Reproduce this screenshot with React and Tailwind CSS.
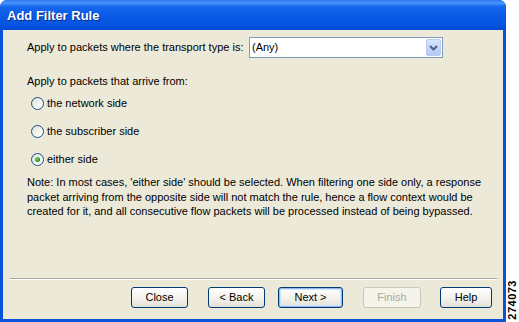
import { useState } from 'react';

const ui = { fontFamily: '"Liberation Sans", Arial, sans-serif' };

function Radio({ checked }) {
  return (
    <span className="relative inline-flex h-[13px] w-[13px] shrink-0 items-center justify-center rounded-full border border-[#1c5180] bg-gradient-to-br from-[#dcd9cd] via-[#f4f3ee] to-white">
      {checked && (
        <span className="h-[5px] w-[5px] rounded-full bg-[radial-gradient(circle_at_35%_35%,#7bd47b,#21a121_60%,#1a8a1a)]" />
      )}
    </span>
  );
}

function XpButton({ children, width, isDefault, disabled }) {
  return (
    <div
      className={
        'flex h-[21px] items-center justify-center rounded-[3px] border text-[11px] ' +
        (disabled
          ? 'border-[#c9c7ba] bg-[#f5f4ea] text-[#aca899]'
          : isDefault
          ? 'border-[#003c74] bg-gradient-to-b from-white via-[#f4f3ee] to-[#e3e1d6] text-black shadow-[inset_0_0_0_1px_#98b8ea,inset_0_0_0_2px_#cee7ff]'
          : 'border-[#003c74] bg-gradient-to-b from-white via-[#f4f3ee] to-[#e3e1d6] text-black')
      }
      style={{ width }}
    >
      {children}
    </div>
  );
}

export default function App() {
  const [side] = useState('either');

  return (
    <div className="flex h-[322px] w-[519px] bg-white" style={ui}>
      <div className="flex w-[506px] flex-col overflow-hidden rounded-t-[7px] bg-[#0a52dc]">
        <div className="flex h-[30px] shrink-0 items-center bg-[linear-gradient(to_bottom,#2a74f0_0%,#4a95fb_10%,#1666ee_22%,#0b5be6_50%,#0656e2_80%,#0448d4_100%)] pl-[7px] pt-[1px]">
          <span className="text-[13px] font-bold text-white [text-shadow:1px_1px_0_#0a2a86]">Add Filter Rule</span>
        </div>

        <div className="mx-[3px] mb-[3px] flex flex-1 flex-col bg-[#ece9d8] text-[11px] text-black">
          <div className="mt-[7px] flex items-center pl-[24px]">
            <span className="w-[222px]">Apply to packets where the transport type is:</span>
            <div className="flex h-[21px] w-[194px] items-center border border-[#7f9db9] bg-white pl-[2px]">
              <span className="flex-1">(Any)</span>
              <span className="mr-[1px] flex h-[17px] w-[15px] items-center justify-center rounded-[2px] border border-[#b9cbf3] bg-gradient-to-b from-[#d8e4fd] to-[#b4c8f6]">
                <svg width="9" height="6" viewBox="0 0 9 6">
                  <path d="M1 1 L4.5 4.5 L8 1" fill="none" stroke="#4d6185" strokeWidth="2" />
                </svg>
              </span>
            </div>
          </div>

          <div className="mt-[16px] pl-[24px] leading-[14px]">Apply to packets that arrive from:</div>

          <div className="mt-[9px] flex flex-col gap-[15px] pl-[28px]">
            {[
              ['network', 'the network side'],
              ['subscriber', 'the subscriber side'],
              ['either', 'either side'],
            ].map(([key, label]) => (
              <div key={key} className="flex h-[13px] items-center gap-[3px]">
                <Radio checked={side === key} />
                <span>{label}</span>
              </div>
            ))}
          </div>

          <p className="mt-[9px] pl-[24px] pr-[20px] leading-[14.5px]">
            Note: In most cases, 'either side' should be selected. When filtering one side only, a response
            <br />
            packet arriving from the opposite side will not match the rule, hence a flow context would be
            <br />
            created for it, and all consecutive flow packets will be processed instead of being bypassed.
          </p>

          <div className="mt-auto ml-[7px] mr-[6px] border-t border-b border-t-[#aca899] border-b-white" />

          <div className="mt-[7px] mb-[11px] flex items-center pl-[128px]">
            <XpButton width="57px">Close</XpButton>
            <div className="w-[20px]" />
            <XpButton width="57px">&lt; Back</XpButton>
            <div className="w-[13px]" />
            <XpButton width="65px" isDefault>Next &gt;</XpButton>
            <div className="w-[20px]" />
            <XpButton width="58px" disabled>Finish</XpButton>
            <div className="w-[19px]" />
            <XpButton width="52px">Help</XpButton>
          </div>
        </div>
      </div>

      <div className="flex flex-1 items-end justify-center pb-[2px]">
        <span className="rotate-180 text-[11px] font-bold leading-none tracking-[0.5px] [writing-mode:vertical-rl]">274073</span>
      </div>
    </div>
  );
}
